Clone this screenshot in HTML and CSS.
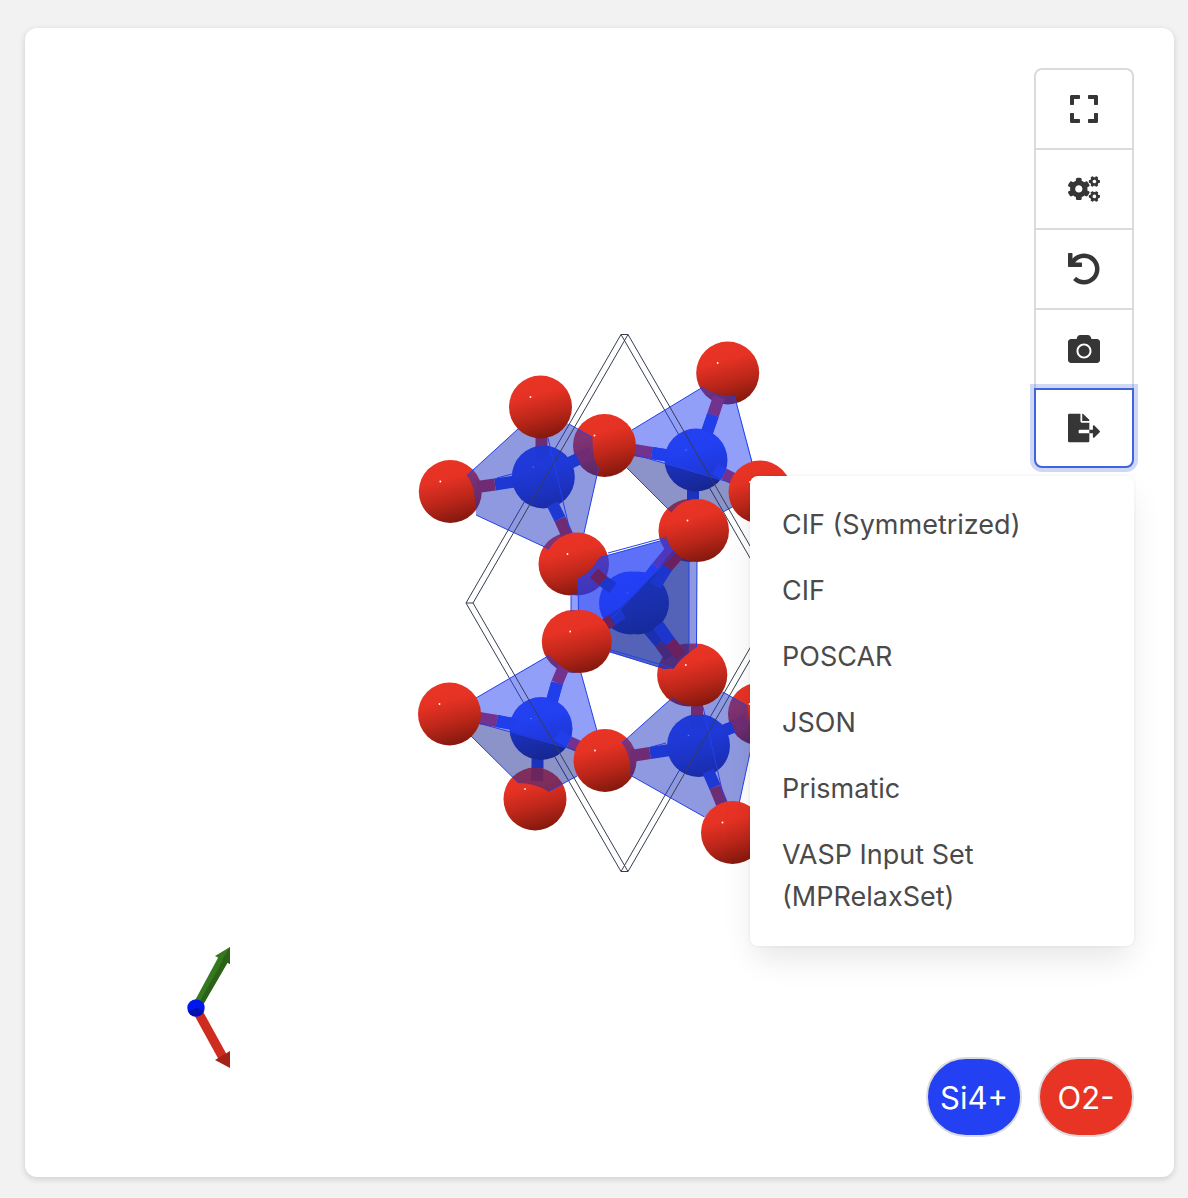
FILE: index.html
```html
<!DOCTYPE html>
<html lang="en">
<head>
<meta charset="utf-8">
<meta name="viewport" content="width=device-width, initial-scale=1">
<title>Crystal structure</title>
<link rel="stylesheet" href="styles.css">
</head>
<body>
<main class="viewer">
  <svg class="scene" viewBox="25 28 1149 1149" role="img" aria-label="Crystal structure with silicon and oxygen atoms">
    <defs>
      <linearGradient id="red-shade" x1=".38" y1="0" x2=".64" y2="1">
        <stop offset="0" stop-color="#e93425"/>
        <stop offset=".3" stop-color="#e53224"/>
        <stop offset=".65" stop-color="#b92619"/>
        <stop offset="1" stop-color="#80170d"/>
      </linearGradient>
      <linearGradient id="blue-shade" x1=".38" y1="0" x2=".64" y2="1">
        <stop offset="0" stop-color="#2341f3"/>
        <stop offset=".35" stop-color="#203eee"/>
        <stop offset=".7" stop-color="#1a31c0"/>
        <stop offset="1" stop-color="#132489"/>
      </linearGradient>
      <g id="oxygen">
        <circle r="31.5" fill="url(#red-shade)"/>
        <circle class="glint" cx="-10" cy="-10" r=".9"/>
      </g>
      <g id="silicon">
        <circle r="31.5" fill="url(#blue-shade)"/>
        <circle class="glint dim" cx="-10" cy="-10" r=".8"/>
      </g>
    </defs>

    <!-- rear edges of the unit cell -->
    <path class="cell" d="M621 334.500H628M621 871.500H628M466 603H473M621 334.500L466 603L621 871.500L776 603Z"/>

    <!-- rear atoms -->
    <use href="#oxygen" x="570" y="564"/>
    <use href="#oxygen" x="690" y="530.500"/>
    <use href="#oxygen" x="573.300" y="641.500"/>
    <use href="#oxygen" x="688.600" y="675"/>
    <use href="#oxygen" x="450.300" y="491.500"/>
    <use href="#oxygen" x="759.500" y="714"/>
    <use href="#oxygen" x="535" y="799"/>
    <use href="#oxygen" x="727.700" y="373"/>

    <!-- upper right tetrahedron -->
    <path class="bond si" d="M693 485V501M696 460L652 453M701 450L713 415"/>
    <path class="bond ox" d="M652 453L634 450M713 415L719 397"/>
    <use href="#silicon" x="696" y="460"/>
    <path class="bond si" d="M668 455.500L652 453M707 432L713 415M715 469L724 474"/>
    <path class="bond ox" d="M724 474L738 481"/>
    <path class="face light" d="M632 430L703 387Q715 396 734.500 396L756 475L732 483L634 455Z"/>
    <path class="face dark" d="M627 468L634 455L732 483L740 503L723 512L693 499Q680 501 671.500 512.500Z"/>
    <path class="edge" d="M632 430L703 387M734.500 396L754 470M634 454.500L732 483M627 468L671.500 512.500M723 512L734 506"/>
    <use href="#oxygen" x="604.500" y="445.500"/>
    <use href="#oxygen" x="760" y="492"/>

    <!-- upper left tetrahedron -->
    <path class="bond si" d="M515 481.500L495 484.500M565 465L578 459"/>
    <path class="bond ox" d="M495 484.500L477 487M578 459L591 453"/>
    <use href="#silicon" x="543.300" y="477"/>
    <path class="bond ox" d="M541.500 435V447"/>
    <path class="bond si" d="M541.500 446L542.500 459M552.500 504L560 519M570 463L578 459"/>
    <path class="bond ox" d="M560 519L568 537"/>
    <path class="face mid" d="M518 429L467 475.500Q474 484 475 500L476 515L549 549Q557 537 571 533H584L598.500 468.500Q592 457 592.500 437.500L569 424L541 412Z"/>
    <path class="edge" d="M518 429L467 475.500M476 515L549 549M584 533L598.500 468.500M592.500 437.500L569 424M548 438L570.500 533M497 478L512 474"/>
    <use href="#oxygen" x="540.500" y="407"/>

    <!-- lower left tetrahedron -->
    <path class="bond si" d="M520 725L497 721M550 708L557 683M537.500 755V768"/>
    <path class="bond ox" d="M497 721L479 718M557 683L565 664M537.500 768L537 781"/>
    <use href="#silicon" x="541" y="728.500"/>
    <path class="bond si" d="M515 724.500L497 721M552 701L557 683M557 735L569 742"/>
    <path class="bond ox" d="M569 742L582 748"/>
    <path class="face light" d="M476 698L549 655.500L563 668L581 673L600 742L577 750L480 723Z"/>
    <path class="face dark" d="M471 736L480 723L577 750L580 775L548.500 791.500Q535 783 518.500 783Z"/>
    <path class="edge" d="M476 698L549 655.500M581 673L597 731M480 723.500L577 750.500M471 736L518.500 783M548.500 791.500L577 776"/>
    <use href="#oxygen" x="449.500" y="714"/>
    <use href="#oxygen" x="605" y="760.500"/>

    <!-- lower right tetrahedron -->
    <path class="bond si" d="M670 750L650 753M720 732L733 727"/>
    <path class="bond ox" d="M650 753L631 756M733 727L746 721"/>
    <use href="#silicon" x="698.500" y="745.500"/>
    <path class="bond ox" d="M697 704V716"/>
    <path class="bond si" d="M697 715V728M708 771L715 787M723 731L733 727"/>
    <path class="bond ox" d="M715 787L722 804"/>
    <path class="face mid" d="M622 743L672 698L697 685L723 692L747.500 706Q748 722 753 738L739 804L704.500 817L630 775Q632 757 622 743Z"/>
    <path class="edge" d="M622 743L672 698M723 692L747.500 706M753 739L739 804M704.500 817L630 775M703 707L725 803M651 747L666 743"/>
    <use href="#oxygen" x="732.500" y="832.500"/>

    <!-- central tetrahedra, one almost behind the other -->
    <use href="#oxygen" x="577.500" y="564"/>
    <use href="#oxygen" x="695.800" y="675"/>
    <path class="face light" d="M571 594H579V614H571Z"/>
    <path class="face mid" d="M689 560H697V647L689 653Z"/>
    <path class="bond si" d="M641 588L657 567M645 625L660 643"/>
    <path class="bond ox" d="M657 567L672 549M660 643L670 657"/>
    <use href="#silicon" x="630.500" y="603"/>
    <use href="#silicon" x="637.500" y="603"/>
    <path class="face center-light" d="M578 579Q592 572 600 557.500L667 539L675.500 551.500L602 627L579 614Z"/>
    <path class="face center-dark" d="M675.500 551.500L689 560V653Q679 660 674 668.500L665 669L605 651L602 627Z"/>
    <path class="bond si veiled" d="M655 586L667 567M658 625L670 642M613 588L603 581M623 613L612 620"/>
    <path class="bond ox veiled" d="M667 567L681 551M670 642L681 656M603 581L594 573M612 620L602 627"/>
    <path class="edge" d="M578.500 612L578 579Q592 572 600 557.500M600 557.500L667 539M608 553L667 537M689 562V645M697 562L696.500 647M571 596V612M606 650.500L665 669M608 649L674 668.500M675.500 551.500L612 618"/>
    <use href="#oxygen" x="697.500" y="530.500"/>
    <use href="#oxygen" x="580.200" y="641.500"/>

    <!-- front edges of the unit cell -->
    <path class="cell" d="M628 334.500L473 603L628 871.500L783 603Z"/>

    <!-- orientation axes -->
    <path class="axis-b" d="M192 1006L200 1010L227 963L219 956Z"/>
    <path class="axis-b-dark" d="M196 1008L200 1010L228 962L223 960Z"/>
    <path class="axis-b" d="M215 956L230 947V964Z"/>
    <path class="axis-b-dark" d="M222 960L230 947V964Z"/>
    <path class="axis-a" d="M192 1011L200 1006L227 1055L219 1060Z"/>
    <path class="axis-a-dark" d="M215 1060L230 1051V1068Z"/>
    <circle class="axis-c" cx="196" cy="1008" r="8.700"/>
    <path class="axis-c-dark" d="M188 1011L197 1008L204 1011A8.700 8.700 0 0 1 188 1011Z"/>
  </svg>

  <div class="toolbar">
    <button class="tool" type="button" aria-label="Full screen">
      <svg class="icon" viewBox="-32 0 512 512" aria-hidden="true"><path d="M0 180V56c0-13.300 10.700-24 24-24h124c6.600 0 12 5.400 12 12v40c0 6.600-5.400 12-12 12H64v84c0 6.600-5.400 12-12 12H12c-6.600 0-12-5.400-12-12zM288 44v40c0 6.600 5.400 12 12 12h84v84c0 6.600 5.400 12 12 12h40c6.600 0 12-5.400 12-12V56c0-13.300-10.700-24-24-24H300c-6.600 0-12 5.400-12 12zm148 276h-40c-6.600 0-12 5.400-12 12v84h-84c-6.600 0-12 5.400-12 12v40c0 6.600 5.400 12 12 12h124c13.300 0 24-10.700 24-24V332c0-6.600-5.400-12-12-12zM160 468v-40c0-6.600-5.400-12-12-12H64v-84c0-6.600-5.400-12-12-12H12c-6.600 0-12 5.400-12 12v124c0 13.300 10.700 24 24 24h124c6.600 0 12-5.400 12-12z"/></svg>
    </button>
    <button class="tool" type="button" aria-label="Settings">
      <svg class="icon" viewBox="0 0 640 512" aria-hidden="true"><path d="M512.1 191l-8.2 14.3c-3 5.3-9.4 7.5-15.1 5.4-11.8-4.4-22.6-10.7-32.1-18.6-4.6-3.8-5.8-10.5-2.8-15.7l8.2-14.3c-6.9-8-12.3-17.3-15.9-27.4h-16.5c-6 0-11.200-4.300-12.200-10.300-2-12-2.100-24.600 0-37.100 1-6 6.200-10.400 12.200-10.400h16.500c3.600-10.100 9-19.400 15.900-27.400l-8.200-14.300c-3-5.200-1.900-11.900 2.800-15.700 9.500-7.900 20.400-14.200 32.100-18.600 5.700-2.100 12.100.1 15.100 5.400l8.200 14.300c10.500-1.900 21.200-1.900 31.700 0L552 6.300c3-5.300 9.400-7.500 15.100-5.400 11.800 4.400 22.600 10.700 32.100 18.600 4.600 3.800 5.800 10.500 2.800 15.700l-8.200 14.300c6.900 8 12.300 17.300 15.900 27.400h16.500c6 0 11.200 4.300 12.200 10.300 2 12 2.100 24.600 0 37.100-1 6-6.200 10.400-12.200 10.400h-16.500c-3.600 10.100-9 19.400-15.900 27.400l8.200 14.300c3 5.200 1.900 11.900-2.800 15.700-9.500 7.900-20.400 14.200-32.100 18.600-5.700 2.100-12.100-.1-15.100-5.400l-8.200-14.300c-10.400 1.900-21.200 1.900-31.700 0zm-10.500-58.800c38.500 29.600 82.400-14.300 52.800-52.800-38.500-29.700-82.400 14.300-52.800 52.800zM386.300 286.100l33.700 16.800c10.100 5.800 14.500 18.100 10.500 29.100-8.900 24.200-26.400 46.400-42.600 65.800-7.400 8.900-20.200 11.100-30.300 5.300l-29.100-16.800c-16 13.700-34.600 24.600-54.900 31.700v33.600c0 11.600-8.300 21.600-19.700 23.600-24.600 4.200-50.400 4.400-75.900 0-11.500-2-20-11.900-20-23.600V418c-20.300-7.200-38.900-18-54.900-31.700L74 403c-10 5.800-22.900 3.600-30.300-5.300-16.200-19.400-33.300-41.600-42.200-65.700-4-10.900.4-23.200 10.500-29.100l33.300-16.800c-3.900-20.900-3.900-42.400 0-63.400L12 205.800c-10.100-5.800-14.600-18.100-10.500-29 8.900-24.200 26-46.400 42.200-65.800 7.400-8.900 20.200-11.100 30.300-5.300l29.100 16.800c16-13.700 34.600-24.600 54.900-31.700V57.100c0-11.500 8.200-21.500 19.600-23.500 24.600-4.200 50.500-4.400 76-.1 11.500 2 20 11.900 20 23.600v33.600c20.300 7.200 38.900 18 54.900 31.700l29.100-16.800c10-5.800 22.900-3.600 30.300 5.300 16.200 19.400 33.200 41.600 42.100 65.800 4 10.900.1 23.200-10 29.100l-33.700 16.800c3.900 21 3.900 42.500 0 63.500zm-117.600 21.100c59.200-77-28.700-164.900-105.700-105.700-59.200 77 28.700 164.900 105.700 105.700zm243.400 182.700l-8.200 14.300c-3 5.300-9.400 7.500-15.100 5.400-11.800-4.400-22.600-10.700-32.100-18.600-4.600-3.800-5.800-10.500-2.800-15.700l8.200-14.300c-6.900-8-12.300-17.300-15.900-27.400h-16.500c-6 0-11.200-4.300-12.200-10.300-2-12-2.100-24.600 0-37.100 1-6 6.200-10.400 12.200-10.400h16.500c3.600-10.100 9-19.400 15.900-27.400l-8.200-14.300c-3-5.200-1.900-11.900 2.800-15.700 9.500-7.900 20.400-14.200 32.100-18.600 5.700-2.100 12.100.1 15.100 5.400l8.200 14.300c10.500-1.900 21.200-1.900 31.700 0l8.200-14.300c3-5.300 9.400-7.500 15.100-5.400 11.800 4.400 22.600 10.700 32.100 18.600 4.600 3.800 5.800 10.500 2.800 15.700l-8.200 14.300c6.900 8 12.300 17.300 15.900 27.400h16.500c6 0 11.200 4.300 12.200 10.300 2 12 2.100 24.600 0 37.100-1 6-6.200 10.400-12.200 10.400h-16.500c-3.600 10.100-9 19.400-15.900 27.400l8.200 14.300c3 5.200 1.900 11.900-2.800 15.700-9.500 7.900-20.400 14.200-32.100 18.600-5.700 2.100-12.100-.1-15.100-5.400l-8.200-14.300c-10.400 1.900-21.200 1.900-31.700 0zM501.600 431c38.500 29.600 82.400-14.300 52.800-52.800-38.500-29.600-82.400 14.300-52.800 52.800z"/></svg>
    </button>
    <button class="tool" type="button" aria-label="Reset view">
      <svg class="icon" viewBox="0 0 512 512" aria-hidden="true"><path d="M212.333 224.333H12c-6.627 0-12-5.373-12-12V12C0 5.373 5.373 0 12 0h48c6.627 0 12 5.373 12 12v78.112C117.773 39.279 184.260 7.470 258.175 8.007c136.906.994 246.448 111.623 246.157 248.532C504.041 393.258 393.120 504 256.333 504c-64.089 0-122.496-24.313-166.510-64.215-5.099-4.622-5.334-12.554-.467-17.420l33.967-33.967c4.474-4.474 11.662-4.717 16.401-.525C170.760 415.336 211.580 432 256.333 432c97.268 0 176-78.716 176-176 0-97.267-78.716-176-176-176-58.496 0-110.280 28.476-142.274 72.333h98.274c6.627 0 12 5.373 12 12v48c0 6.627-5.373 12-12 12z"/></svg>
    </button>
    <button class="tool" type="button" aria-label="Download image">
      <svg class="icon" viewBox="0 0 512 512" aria-hidden="true"><path d="M512 144v288c0 26.500-21.500 48-48 48H48c-26.500 0-48-21.500-48-48V144c0-26.500 21.500-48 48-48h88l12.300-32.900c7-18.700 24.900-31.100 44.900-31.100h125.500c20 0 37.900 12.400 44.900 31.100L376 96h88c26.500 0 48 21.500 48 48zM376 288c0-66.200-53.800-120-120-120s-120 53.800-120 120 53.800 120 120 120 120-53.800 120-120zm-32 0c0 48.500-39.500 88-88 88s-88-39.500-88-88 39.500-88 88-88 88 39.500 88 88z"/></svg>
    </button>
    <button class="tool is-active" type="button" aria-label="Export" aria-haspopup="true" aria-expanded="true">
      <svg class="icon" viewBox="0 0 576 512" aria-hidden="true"><path d="M384 121.900c0-6.300-2.500-12.400-7-16.900L279.100 7c-4.500-4.500-10.600-7-17-7H256v128h128zM571 308l-95.700-96.400c-10.100-10.100-27.400-3-27.400 11.300V288h-64v64h64v65.200c0 14.300 17.300 21.400 27.400 11.300L571 332c6.600-6.600 6.600-17.400 0-24zm-379 28v-32c0-8.800 7.200-16 16-16h176V160H248c-13.200 0-24-10.800-24-24V0H24C10.700 0 0 10.700 0 24v464c0 13.300 10.700 24 24 24h336c13.300 0 24-10.700 24-24V352H208c-8.800 0-16-7.200-16-16z"/></svg>
    </button>
    <nav class="menu" aria-label="Export formats">
      <a class="menu-item" href="#cif-symmetrized">CIF (Symmetrized)</a>
      <a class="menu-item" href="#cif">CIF</a>
      <a class="menu-item" href="#poscar">POSCAR</a>
      <a class="menu-item" href="#json">JSON</a>
      <a class="menu-item" href="#prismatic">Prismatic</a>
      <a class="menu-item" href="#vasp">VASP Input Set (MPRelaxSet)</a>
    </nav>
  </div>

  <div class="legend">
    <button class="species silicon" type="button">Si4+</button>
    <button class="species oxygen" type="button">O2-</button>
  </div>
</main>
</body>
</html>
```
FILE: styles.css
```css
* {
  box-sizing: border-box;
}

body {
  margin: 0;
  padding: 28px 14px 21px 25px;
  background: #f2f2f2;
  color: #4a4a4a;
  font-family: Inter, "Liberation Sans", sans-serif;
}

.viewer {
  display: grid;
  background: #fff;
  border-radius: 12px;
  box-shadow: 0 2px 6px rgba(10, 10, 10, .16);
}

.scene,
.toolbar,
.legend {
  grid-area: 1 / 1;
}

.scene {
  display: block;
  width: 100%;
  height: auto;
}

.cell {
  fill: none;
  stroke: #343e50;
  stroke-width: 1;
}

.bond {
  fill: none;
  stroke-width: 12;
}

.bond.si {
  stroke: #1f3ce4;
}

.bond.ox {
  stroke: #c02428;
}

.bond.si.veiled {
  stroke: #1c35cc;
}

.bond.ox.veiled {
  stroke: #6b2160;
}

.face {
  fill-opacity: .5;
}

.face.light {
  fill: #2340f2;
}

.face.mid {
  fill: #1e34c2;
}

.face.dark {
  fill: #172894;
}

.face.center-light {
  fill: #2340f5;
  fill-opacity: .74;
}

.face.center-dark {
  fill: #182c9e;
  fill-opacity: .74;
}

.edge {
  fill: none;
  stroke: #2440e8;
  stroke-width: 1;
}

.glint {
  fill: #fff;
}

.glint.dim {
  fill: #a9b6ff;
}

.axis-b {
  fill: #35791f;
}

.axis-b-dark {
  fill: #2b6218;
}

.axis-a {
  fill: #cf2c20;
}

.axis-a-dark {
  fill: #a52218;
}

.axis-c {
  fill: #0018ee;
}

.axis-c-dark {
  fill: #0010b0;
}

.toolbar {
  position: relative;
  display: flex;
  flex-direction: column;
  align-self: start;
  justify-self: end;
  width: 100px;
  margin: 40px;
}

.tool {
  display: flex;
  align-items: center;
  justify-content: center;
  height: 80px;
  padding: 0;
  background: #fff;
  border: 2px solid #dbdbdb;
  border-bottom-width: 0;
  color: #363636;
}

.tool:first-child {
  border-radius: 8px 8px 0 0;
}

.tool.is-active {
  border-color: #4163db;
  border-bottom-width: 2px;
  border-radius: 0 0 8px 8px;
  box-shadow: 0 0 0 4px rgba(65, 99, 219, .25);
}

.icon {
  width: 32px;
  height: 32px;
  fill: currentColor;
}

.menu {
  position: absolute;
  top: 100%;
  right: 0;
  width: 384px;
  margin-top: 8px;
  padding: 16px 0;
  background: #fff;
  border-radius: 8px;
  box-shadow: 0 16px 32px -4px rgba(10, 10, 10, .1), 0 0 0 2px rgba(10, 10, 10, .02);
}

.menu-item {
  display: block;
  padding: 12px 96px 12px 32px;
  color: #4a4a4a;
  font-size: 27px;
  line-height: 42px;
  text-decoration: none;
}

.legend {
  display: flex;
  gap: 16px;
  align-self: end;
  justify-self: end;
  margin: 40px;
}

.species {
  width: 96px;
  height: 80px;
  padding: 2px 0 0;
  border: 2px solid #dbdbdb;
  border-radius: 40px;
  color: #fff;
  font-family: inherit;
  font-size: 31px;
  line-height: 48px;
}

.species.silicon {
  background: #2340f2;
}

.species.oxygen {
  background: #e83425;
}
```
